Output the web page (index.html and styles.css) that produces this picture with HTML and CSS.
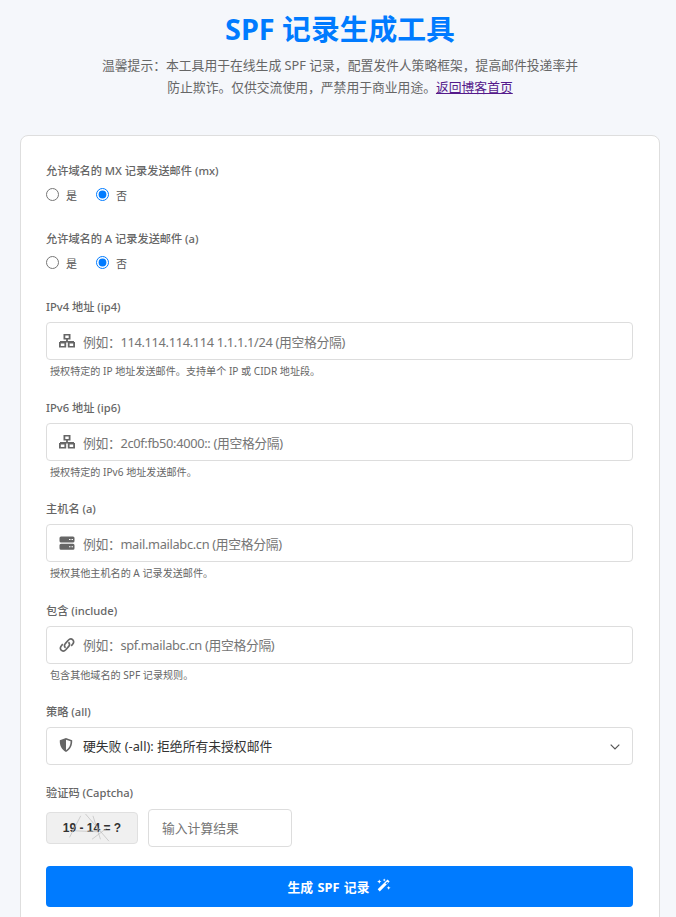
FILE: index.html
```html
<!DOCTYPE html>
<html lang="zh-CN">
<head>
<meta charset="utf-8">
<title>SPF 记录生成工具</title>
<link rel="stylesheet" href="styles.css">
</head>
<body>
<header class="head">
  <h1 class="title">SPF 记录生成工具</h1>
  <p class="intro">温馨提示&#xFF1A;本工具用于在线生成 SPF 记录&#xFF0C;配置发件人策略框架&#xFF0C;提高邮件投递率并防止欺诈。仅供交流使用&#xFF0C;严禁用于商业用途。<a class="intro-link" href="#">返回博客首页</a></p>
</header>
<main class="card">
  <form class="form">
    <div class="field field-radio">
      <div class="label label-tight">允许域名的 MX 记录发送邮件 (mx)</div>
      <div class="radios">
        <label class="radio"><input class="radio-input" type="radio" name="mx">是</label>
        <label class="radio"><input class="radio-input" type="radio" name="mx" checked>否</label>
      </div>
    </div>
    <div class="field field-radio">
      <div class="label label-tight">允许域名的 A 记录发送邮件 (a)</div>
      <div class="radios">
        <label class="radio"><input class="radio-input" type="radio" name="a">是</label>
        <label class="radio"><input class="radio-input" type="radio" name="a" checked>否</label>
      </div>
    </div>
    <div class="field">
      <div class="label">IPv4 地址 (ip4)</div>
      <div class="control">
        <svg class="icon" viewBox="0 0 16 14"><path d="M4.500 0h7v5.500H8.900v1.500H15v1.500H1V7H7.100V5.500H4.500zM6.300 1.600v2.300h3.400V1.600z" fill-rule="evenodd"/><path d="M0 8h7.200v5.500H0zM1.800 9.500v2.500h3.600V9.500zM8.800 8H16v5.500H8.800zM10.600 9.500v2.500h3.600V9.500z" fill-rule="evenodd"/></svg>
        <input class="input" type="text" placeholder="例如&#xFF1A;114.114.114.114 1.1.1.1/24 (用空格分隔)">
      </div>
      <div class="hint">授权特定的 IP 地址发送邮件。支持单个 IP 或 CIDR 地址段。</div>
    </div>
    <div class="field">
      <div class="label">IPv6 地址 (ip6)</div>
      <div class="control">
        <svg class="icon" viewBox="0 0 16 14"><path d="M4.500 0h7v5.500H8.900v1.500H15v1.500H1V7H7.100V5.500H4.500zM6.300 1.600v2.300h3.400V1.600z" fill-rule="evenodd"/><path d="M0 8h7.200v5.500H0zM1.800 9.500v2.500h3.600V9.500zM8.800 8H16v5.500H8.800zM10.600 9.500v2.500h3.600V9.500z" fill-rule="evenodd"/></svg>
        <input class="input" type="text" placeholder="例如&#xFF1A;2c0f:fb50:4000:: (用空格分隔)">
      </div>
      <div class="hint">授权特定的 IPv6 地址发送邮件。</div>
    </div>
    <div class="field">
      <div class="label">主机名 (a)</div>
      <div class="control">
        <svg class="icon" viewBox="0 0 16 14"><path d="M2 .5h12a1.500 1.500 0 0 1 1.500 1.500v3A1.500 1.500 0 0 1 14 6.500H2A1.500 1.500 0 0 1 .5 5V2A1.500 1.500 0 0 1 2 .5zM2 7.800h12a1.500 1.500 0 0 1 1.500 1.500v3a1.500 1.500 0 0 1-1.500 1.500H2a1.500 1.500 0 0 1-1.500-1.500v-3A1.500 1.500 0 0 1 2 7.800z"/><path class="icon-cut" d="M10 3h1.500v1H10zM12.500 3H14v1h-1.500zM10 10.300h1.500v1H10zM12.500 10.300H14v1h-1.500z"/></svg>
        <input class="input" type="text" placeholder="例如&#xFF1A;mail.mailabc.cn (用空格分隔)">
      </div>
      <div class="hint">授权其他主机名的 A 记录发送邮件。</div>
    </div>
    <div class="field">
      <div class="label">包含 (include)</div>
      <div class="control">
        <svg class="icon icon-line" viewBox="0 0 16 14"><path d="M6.600 9.800C5 8.600 5.200 6.700 6.500 5.300L9 2.500c1.500-1.600 3.600-1.800 4.800-.7 1.300 1.200 1 3.200-.4 4.700l-1.200 1.300"/><path d="M9.400 4.200c1.600 1.200 1.400 3.100.1 4.500L7 11.500c-1.500 1.600-3.600 1.800-4.800.7-1.300-1.200-1-3.200.4-4.700l1.200-1.300"/></svg>
        <input class="input" type="text" placeholder="例如&#xFF1A;spf.mailabc.cn (用空格分隔)">
      </div>
      <div class="hint">包含其他域名的 SPF 记录规则。</div>
    </div>
    <div class="field field-select">
      <div class="label">策略 (all)</div>
      <div class="control">
        <svg class="icon icon-raised" viewBox="0 0 14 14"><path d="M7 0l6.200 2.300c.3 5-1.600 9.400-6.200 11.700C2.400 11.700.5 7.300.8 2.300zM7 1.800v10.400c3.200-1.900 4.600-5.300 4.600-9z" fill-rule="evenodd"/></svg>
        <select class="input select"><option>硬失败 (-all): 拒绝所有未授权邮件</option></select>
        <svg class="chevron" viewBox="0 0 10 6"><path d="M.7.7L5 5l4.300-4.300"/></svg>
      </div>
    </div>
    <div class="field field-captcha">
      <div class="label label-loose">验证码 (Captcha)</div>
      <div class="captcha-row">
        <div class="captcha">19 - 14 = ?
          <svg class="captcha-noise" viewBox="0 0 92 32"><path d="M22 26L34 3M39 1L64 30M47 3L55 28M62 16L46 28M28 19L52 20"/></svg>
        </div>
        <input class="captcha-input" type="text" placeholder="输入计算结果">
      </div>
    </div>
    <button class="submit" type="button">生成 SPF 记录
      <svg class="wand" viewBox="0 0 16 14"><path d="M12.300 1l2.200 2.200L4 13.800l-2.200-2.200zM10 5.300l1 1 1.900-1.900-1-1z" fill-rule="evenodd"/><path d="M3.500 1l.7 1.600 1.600.7-1.600.7-.7 1.600-.7-1.600-1.600-.7 1.600-.7zM8.800 0l.5 1.100 1.100.5-1.100.5-.5 1.100-.5-1.100-1.100-.5 1.100-.5zM13.500 8l.6 1.400 1.400.6-1.400.6-.6 1.400-.6-1.400-1.400-.6 1.400-.6z"/></svg>
    </button>
  </form>
</main>
</body>
</html>
```
FILE: styles.css
```css
* { box-sizing: border-box; }
html, body { margin: 0; }
body {
  background: #f5f7fb;
  color: #333;
  font-family: "Noto Sans", "Noto Sans CJK SC", sans-serif;
  padding: 0 16px 20px 20px;
}
.head { text-align: center; padding-top: 8px; }
.title {
  margin: 0;
  color: #007bff;
  font-size: 28.8px;
  line-height: 42px;
  font-weight: 700;
}
.intro {
  width: 484px;
  margin: 4px auto 0;
  color: #666;
  font-size: 12.8px;
  line-height: 22px;
}
.intro-link { color: #551a8b; text-decoration: underline; }
.card {
  margin-top: 37px;
  width: 640px;
  background: #fff;
  border: 1px solid #dedede;
  border-radius: 8px;
  padding: 25px 26px 25px 25px;
}
.form { display: flex; flex-direction: column; }
.field { margin-bottom: 20px; }
.field-radio { margin-bottom: 23px; }
.field-select { margin-bottom: 18px; }
.field-captcha { margin-bottom: 19px; }
.label {
  color: #666;
  font-size: 11.2px;
  font-weight: 500;
  line-height: 20px;
  margin-bottom: 5px;
}
.label-tight { margin-bottom: 2px; }
.label-loose { margin-bottom: 6px; }
.radios { display: flex; gap: 19px; height: 23px; align-items: center; }
.radio { display: flex; align-items: center; gap: 7px; color: #555; font-size: 11px; }
.radio-input { margin: 0; width: 13px; height: 13px; accent-color: #007bff; }
.control { position: relative; }
.icon {
  position: absolute;
  left: 13px;
  top: 12px;
  width: 16px;
  height: 14px;
  fill: #666;
}
.icon-raised { top: 11px; width: 14px; }
.icon-cut { fill: #fff; }
.icon-line { fill: none; stroke: #666; stroke-width: 1.700; }
.input {
  display: block;
  width: 100%;
  height: 38px;
  border: 1px solid #ddd;
  border-radius: 4px;
  background: #fff;
  padding: 1px 12px 0 36px;
  font-family: inherit;
  font-size: 12.8px;
  color: #333;
  outline: none;
}
.input::placeholder { color: #757575; opacity: 1; letter-spacing: -0.32px; }
.captcha-input::placeholder { color: #757575; opacity: 1; }
.select { appearance: none; padding-top: 0; }
.chevron {
  position: absolute;
  right: 13px;
  top: 17px;
  width: 10px;
  height: 6px;
  fill: none;
  stroke: #555;
  stroke-width: 1.200;
}
.hint {
  color: #666;
  font-size: 10.1px;
  line-height: 14.2px;
  margin: 4px 0 0 4px;
}
.captcha-row { display: flex; align-items: center; gap: 10px; }
.captcha {
  position: relative;
  width: 92px;
  height: 32px;
  background: #f0f0f0;
  border: 1px solid #e0e0e0;
  border-radius: 4px;
  display: flex;
  align-items: center;
  justify-content: center;
  font-family: "Liberation Sans", sans-serif;
  font-size: 12px;
  font-weight: 700;
  color: #333;
}
.captcha-noise {
  position: absolute;
  inset: 0;
  width: 100%;
  height: 100%;
  fill: none;
  stroke: #bbb;
  stroke-width: .7;
}
.captcha-input {
  width: 144px;
  height: 38px;
  border: 1px solid #ddd;
  border-radius: 4px;
  padding: 0 13px;
  font-family: inherit;
  font-size: 12.8px;
  outline: none;
}
.submit {
  height: 41px;
  width: 100%;
  border: 0;
  border-radius: 4px;
  background: #007bff;
  color: #fff;
  font-family: inherit;
  font-size: 12.8px;
  font-weight: 700;
  word-spacing: 1px;
  display: flex;
  align-items: center;
  justify-content: center;
  gap: 7px;
}
.wand { width: 15px; height: 14px; fill: #fff; margin-top: -2px; }
```
